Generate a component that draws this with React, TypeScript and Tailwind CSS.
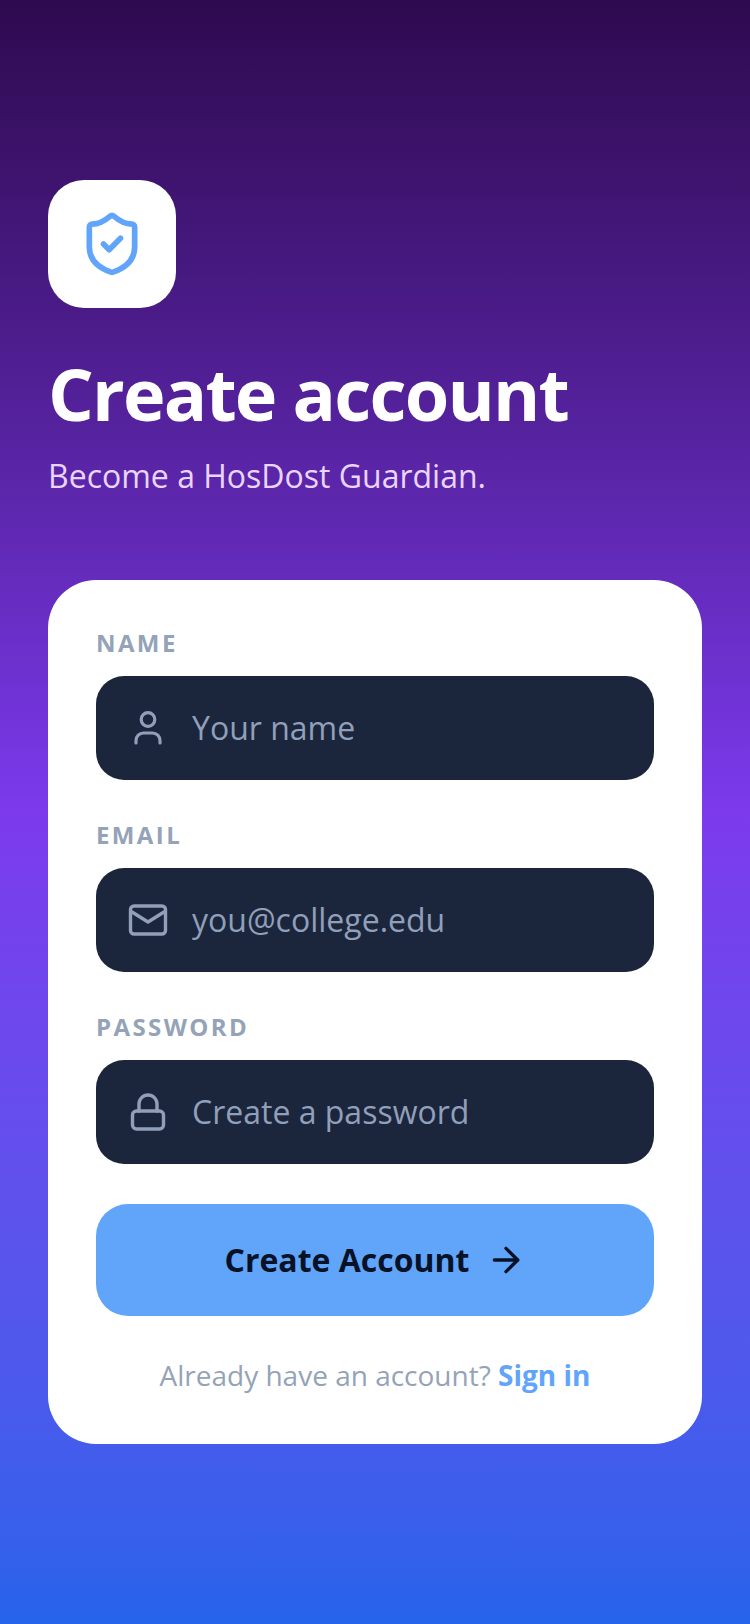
import { ReactNode } from 'react'
import { ArrowRight, ShieldCheck } from 'lucide-react'

function UserIcon() {
  return (
    <svg width="36" height="36" viewBox="0 0 36 36" fill="none" stroke="currentColor" strokeWidth="3.2" strokeLinecap="round">
      <circle cx="18" cy="9.5" r="6.8" />
      <path d="M6 33v-2.5a7.5 7.5 0 0 1 7.5-7.5h9a7.5 7.5 0 0 1 7.5 7.5V33" />
    </svg>
  )
}

function MailIcon() {
  return (
    <svg width="40" height="36" viewBox="0 0 40 36" fill="none" stroke="currentColor" strokeWidth="3.4" strokeLinecap="round" strokeLinejoin="round">
      <rect x="2.5" y="4" width="35" height="28" rx="3.5" />
      <path d="M4 10 20 20 36 10" />
    </svg>
  )
}

function LockIcon() {
  return (
    <svg width="36" height="40" viewBox="0 0 36 40" fill="none" stroke="currentColor" strokeWidth="3.4" strokeLinecap="round" strokeLinejoin="round">
      <rect x="2.5" y="19" width="31" height="18" rx="4" />
      <path d="M9 19v-7a9 9 0 0 1 18 0v7" />
    </svg>
  )
}

function Field({ label, icon, placeholder, type = 'text' }: { label: string; icon: ReactNode; placeholder: string; type?: string }) {
  return (
    <div>
      <label className="block text-[24px] leading-[32px] font-bold tracking-widest text-[#94a3b8]">{label}</label>
      <div className="mt-[17px] flex h-[104px] items-center rounded-[28px] bg-[#1b263d] text-[#919fb9]">
        <div className="flex w-[96px] shrink-0 justify-center pl-[8px]">{icon}</div>
        <input
          type={type}
          placeholder={placeholder}
          className="w-full bg-transparent text-[32px] text-white outline-none placeholder:text-[#919fb9]"
        />
      </div>
    </div>
  )
}

export default function App() {
  return (
    <div className="min-h-[1624px] w-[750px] bg-linear-to-b from-[#2e0a4f] via-[#7c3aed] to-[#2563eb] px-[48px] pt-[180px] font-['Open_Sans',sans-serif]">
      <div className="flex h-[128px] w-[128px] items-center justify-center rounded-[36px] bg-white">
        <ShieldCheck size={68} strokeWidth={2} className="text-[#60a5fa]" />
      </div>

      <h1 className="mt-[40px] text-[72px] leading-[90px] font-bold tracking-tight text-white">Create account</h1>
      <p className="mt-[16px] text-[32px] leading-[44px] text-[#e9d5ff]">Become a HosDost Guardian.</p>

      <div className="mt-[82px] rounded-[48px] bg-white px-[48px] pt-[47px] pb-[49px]">
        <div className="flex flex-col gap-[39px]">
          <Field label="NAME" icon={<UserIcon />} placeholder="Your name" />
          <Field label="EMAIL" icon={<MailIcon />} placeholder="you@college.edu" type="email" />
          <Field label="PASSWORD" icon={<LockIcon />} placeholder="Create a password" type="password" />
        </div>

        <button className="mt-[40px] flex h-[112px] w-full items-center justify-center gap-[16px] rounded-[32px] bg-[#60a5fa] text-[32px] font-bold text-[#071226]">
          Create Account
          <ArrowRight size={40} strokeWidth={2} />
        </button>

        <p className="mt-[39px] text-center text-[28px] leading-[40px] text-[#94a3b8]">
          Already have an account? <span className="font-bold text-[#60a5fa]">Sign in</span>
        </p>
      </div>
    </div>
  )
}
